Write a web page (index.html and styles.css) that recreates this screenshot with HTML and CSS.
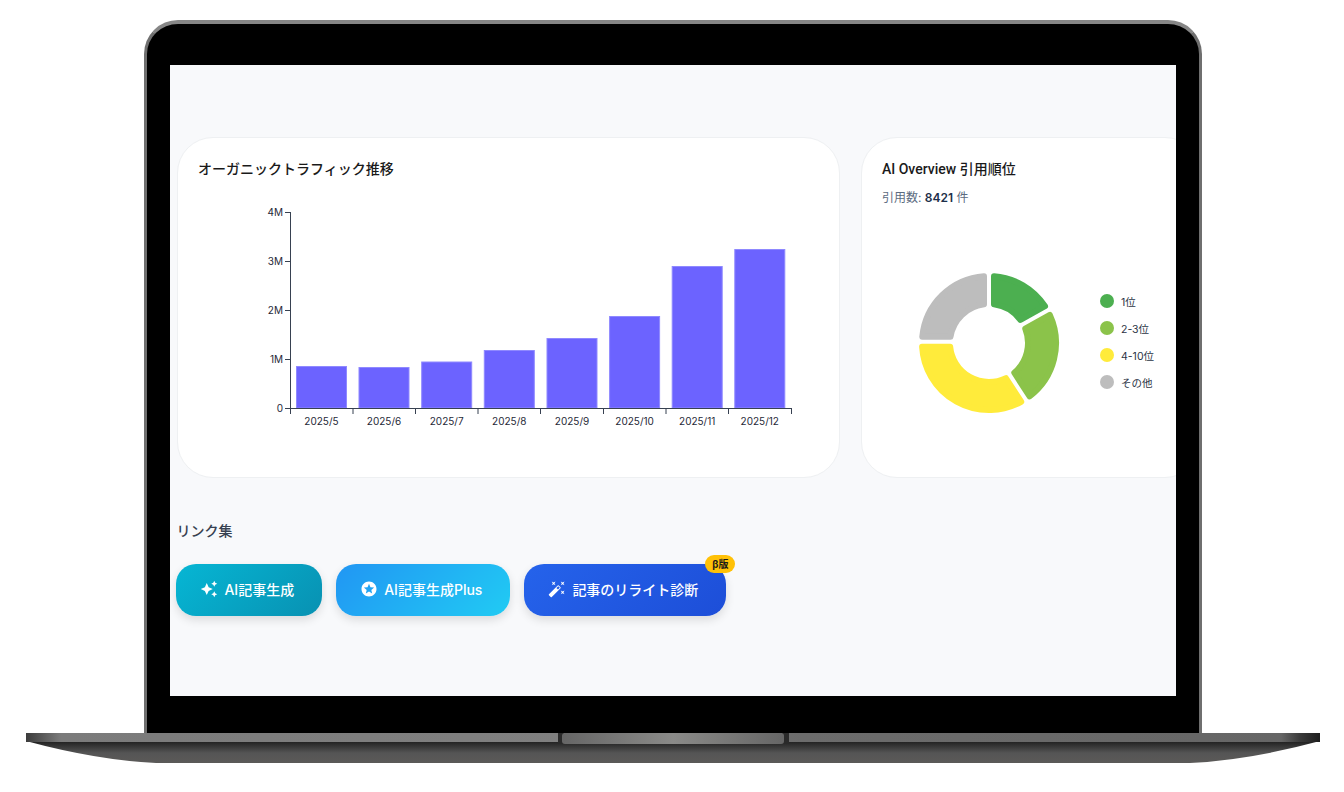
FILE: index.html
```html
<!DOCTYPE html>
<html lang="ja">
<head>
  <meta charset="UTF-8">
  <title>ダッシュボード</title>
  <link rel="stylesheet" href="styles.css">
</head>
<body>
  <div class="laptop">
    <div class="lid">
      <div class="screen">
        <div class="cards">
          <section class="card card-traffic">
            <h3 class="card-title">オーガニックトラフィック推移</h3>
            <svg class="bar-chart" width="620" height="250" viewBox="0 0 620 250">
              <g class="bars">
                <rect x="98.5" y="176.5" width="50" height="41.5"/>
                <rect x="161" y="177.5" width="50" height="40.5"/>
                <rect x="223.7" y="172" width="50" height="46"/>
                <rect x="286.3" y="160.5" width="50" height="57.5"/>
                <rect x="349" y="148.5" width="50" height="69.5"/>
                <rect x="411.6" y="126.5" width="50" height="91.5"/>
                <rect x="474.2" y="76.5" width="50" height="141.5"/>
                <rect x="536.8" y="59.5" width="50" height="158.5"/>
              </g>
              <g class="axis">
                <path d="M92.5 22V218.5H593.5"/>
                <path d="M87 22.5H92M87 71.5H92M87 120.5H92M87 169.5H92M87 218.5H92"/>
                <path d="M92.5 218V224M155 218V224M217.5 218V224M280 218V224M342.5 218V224M405.5 218V224M468 218V224M530.5 218V224M593.5 218V224"/>
              </g>
              <g class="y-labels">
                <text x="85" y="26">4M</text>
                <text x="85" y="75">3M</text>
                <text x="85" y="124">2M</text>
                <text x="85" y="173">1M</text>
                <text x="85" y="222">0</text>
              </g>
              <g class="x-labels">
                <text x="123.5" y="235">2025/5</text>
                <text x="186" y="235">2025/6</text>
                <text x="248.7" y="235">2025/7</text>
                <text x="311.3" y="235">2025/8</text>
                <text x="374" y="235">2025/9</text>
                <text x="436.6" y="235">2025/10</text>
                <text x="499.2" y="235">2025/11</text>
                <text x="561.8" y="235">2025/12</text>
              </g>
            </svg>
          </section>

          <section class="card card-citations">
            <h3 class="card-title">AI Overview 引用順位</h3>
            <p class="card-sub">引用数: <strong>8421</strong> 件</p>
            <div class="donut-row">
              <svg class="donut" width="142" height="142" viewBox="-71 -71 142 142">
                <path class="seg-1" d="M5 -66.81A67 67 0 0 1 56.01 -36.76L31.4 -23.13A39 39 0 0 0 5 -38.68Z"/>
                <path class="seg-2" d="M60.86 -28.03A67 67 0 0 1 40.58 53.31L25.26 29.71A39 39 0 0 0 36.25 -14.38Z"/>
                <path class="seg-3" d="M32.2 58.75A67 67 0 0 1 -66.89 3.8L-38.81 3.8A39 39 0 0 0 16.87 35.16Z"/>
                <path class="seg-4" d="M-66.71 -6.2A67 67 0 0 1 -5 -66.81L-5 -38.68A39 39 0 0 0 -38.5 -6.2Z"/>
              </svg>
              <ul class="legend">
                <li><span class="dot dot-1"></span>1位</li>
                <li><span class="dot dot-2"></span>2-3位</li>
                <li><span class="dot dot-3"></span>4-10位</li>
                <li><span class="dot dot-4"></span>その他</li>
              </ul>
            </div>
          </section>
        </div>

        <h4 class="links-title">リンク集</h4>
        <div class="links">
          <a class="link-btn btn-generate" href="#">
            <svg viewBox="0 0 24 24" width="18" height="18"><path d="M19 9l1.25-2.75L23 5l-2.75-1.25L19 1l-1.25 2.75L15 5l2.75 1.25L19 9zm-7.5.5L9 4 6.5 9.5 1 12l5.5 2.5L9 20l2.5-5.5L17 12l-5.5-2.5zM19 15l-1.25 2.75L15 19l2.75 1.25L19 23l1.25-2.75L23 19l-2.75-1.25L19 15z"/></svg>
            AI記事生成
          </a>
          <a class="link-btn btn-plus" href="#">
            <svg viewBox="0 0 24 24" width="18" height="18"><path d="M11.99 2C6.47 2 2 6.48 2 12s4.47 10 9.99 10C17.52 22 22 17.52 22 12S17.52 2 11.99 2zm4.24 16L12 15.45 7.77 18l1.12-4.81-3.73-3.23 4.92-.42L12 5l1.92 4.53 4.92.42-3.73 3.23L16.23 18z"/></svg>
            AI記事生成Plus
          </a>
          <a class="link-btn btn-rewrite" href="#">
            <svg viewBox="0 0 24 24" width="18" height="18"><path d="M7.5 5.6 10 7 8.6 4.5 10 2 7.5 3.4 5 2l1.4 2.5L5 7zm12 9.8L17 14l1.4 2.5L17 19l2.5-1.4L22 19l-1.4-2.5L22 14zM22 2l-2.5 1.4L17 2l1.4 2.5L17 7l2.5-1.4L22 7l-1.4-2.5zm-7.63 5.29a.9959.9959 0 0 0-1.41 0L1.29 18.96c-.39.39-.39 1.02 0 1.41l2.34 2.34c.39.39 1.02.39 1.41 0L16.7 11.05c.39-.39.39-1.02 0-1.41l-2.33-2.35zm-1.03 5.49-2.12-2.12 2.44-2.44 2.12 2.12-2.44 2.44z"/></svg>
            記事のリライト診断
            <span class="badge">β版</span>
          </a>
        </div>
      </div>
    </div>

    <svg class="base" width="1294" height="30" viewBox="0 0 1294 30">
      <defs>
        <linearGradient id="baseBar" x1="0" x2="1" y1="0" y2="0">
          <stop offset="0" stop-color="#3c3c3c"/>
          <stop offset="0.027" stop-color="#7b7b7b"/>
          <stop offset="0.42" stop-color="#808080"/>
          <stop offset="0.6" stop-color="#6c6c6c"/>
          <stop offset="0.97" stop-color="#666"/>
          <stop offset="0.985" stop-color="#3a3a3a"/>
          <stop offset="1" stop-color="#1e1e1e"/>
        </linearGradient>
        <linearGradient id="baseLower" x1="0" x2="0" y1="0" y2="1">
          <stop offset="0" stop-color="#1f1f1f"/>
          <stop offset="0.55" stop-color="#555"/>
          <stop offset="1" stop-color="#5b5a58"/>
        </linearGradient>
        <linearGradient id="notch" x1="0" x2="1" y1="0" y2="0">
          <stop offset="0" stop-color="#666"/>
          <stop offset="0.5" stop-color="#8a8a88"/>
          <stop offset="1" stop-color="#666"/>
        </linearGradient>
      </defs>
      <path d="M0 8Q70 27 130 30H1164Q1224 27 1294 8Z" fill="url(#baseLower)"/>
      <rect width="1294" height="9" fill="url(#baseBar)"/>
      <rect x="532" width="6" height="10" fill="#2a2a2a"/>
      <rect x="756" width="7" height="10" fill="#2a2a2a"/>
      <rect x="536" width="222" height="11" rx="3" fill="url(#notch)"/>
    </svg>
  </div>
</body>
</html>
```

FILE: styles.css
```css
* {
  box-sizing: border-box;
}
body {
  margin: 0;
  padding-top: 20px;
  background-color: #fff;
  font-family: Inter, 'Noto Sans CJK JP', sans-serif;
  color: #1a1a1a;
}
.laptop {
  width: 1294px;
  margin-left: 26px;
}
.lid {
  margin: 0 118px;
  padding: 41px 23px 37px;
  background-color: #000;
  border: 3px solid #6f6f6f;
  border-top: 4px solid #868686;
  border-bottom: none;
  border-radius: 34px 34px 0 0;
}
.screen {
  height: 631px;
  padding: 72px 0 0 7px;
  background-color: #f8f9fb;
  overflow: hidden;
}
.cards {
  display: flex;
  gap: 21px;
}
.card {
  flex-shrink: 0;
  height: 341px;
  padding: 20px;
  background-color: #fff;
  border: 1px solid #eef0f2;
  border-radius: 36px;
}
.card-traffic {
  width: 663px;
}
.card-citations {
  width: 340px;
}
.card-title {
  margin: 0;
  font-family: Roboto, 'Noto Sans CJK JP', sans-serif;
  font-size: 14px;
  line-height: 22px;
  font-weight: 500;
}
.card-sub {
  margin: 9px 0 0;
  font-size: 12px;
  line-height: 18px;
  color: #5b6b80;
}
.card-sub strong {
  font-weight: 600;
  color: #1e2f4a;
}
.bar-chart {
  display: block;
  margin-top: 10px;
}
.bars rect {
  fill: #6c63ff;
  stroke: #8f89ff;
  stroke-width: 1;
}
.axis path {
  fill: none;
  stroke: #374151;
  stroke-width: 1;
}
.y-labels text,
.x-labels text {
  font-size: 10px;
  fill: #1f2937;
}
.y-labels text {
  text-anchor: end;
}
.x-labels text {
  text-anchor: middle;
}
.donut-row {
  display: flex;
  align-items: center;
  margin: 65px 0 0 35.5px;
}
.donut path {
  stroke-width: 6;
  stroke-linejoin: round;
}
.seg-1 { fill: #4caf50; stroke: #4caf50; }
.seg-2 { fill: #8bc34a; stroke: #8bc34a; }
.seg-3 { fill: #ffeb3b; stroke: #ffeb3b; }
.seg-4 { fill: #bdbdbd; stroke: #bdbdbd; }
.legend {
  list-style: none;
  margin: 0 0 3px 40.5px;
  padding: 0;
  display: flex;
  flex-direction: column;
  gap: 13px;
}
.legend li {
  display: flex;
  align-items: center;
  gap: 7px;
  height: 14px;
  font-size: 10.5px;
  color: #2b3445;
}
.dot {
  width: 14px;
  height: 14px;
  border-radius: 50%;
}
.dot-1 { background-color: #4caf50; }
.dot-2 { background-color: #8bc34a; }
.dot-3 { background-color: #ffeb3b; }
.dot-4 { background-color: #bdbdbd; }
.links-title {
  margin: 43px 0 0 -0.5px;
  font-size: 14px;
  line-height: 20px;
  font-weight: 500;
  color: #374151;
}
.links {
  display: flex;
  gap: 14px;
  margin: 23px 0 0 -0.6px;
}
.link-btn {
  position: relative;
  display: flex;
  align-items: center;
  gap: 6px;
  height: 52px;
  padding: 0 28px 2px 24px;
  border-radius: 20px;
  font-size: 14px;
  font-weight: 500;
  color: #fff;
  text-decoration: none;
  box-shadow: 0 4px 10px rgba(0, 0, 0, 0.12);
}
.link-btn svg {
  fill: #fff;
  flex-shrink: 0;
}
.btn-generate {
  background: linear-gradient(135deg, #06b6d4, #0891b2);
}
.btn-plus {
  background: linear-gradient(135deg, #2196f3, #21cbf3);
}
.btn-rewrite {
  background: linear-gradient(135deg, #2563eb, #1d4ed8);
}
.badge {
  position: absolute;
  top: -9px;
  right: -9px;
  padding: 0 7px;
  height: 18px;
  line-height: 18px;
  border-radius: 9px;
  background-color: #ffc107;
  color: #1a1a1a;
  font-size: 10px;
  font-weight: 700;
}
.base {
  display: block;
}
```
